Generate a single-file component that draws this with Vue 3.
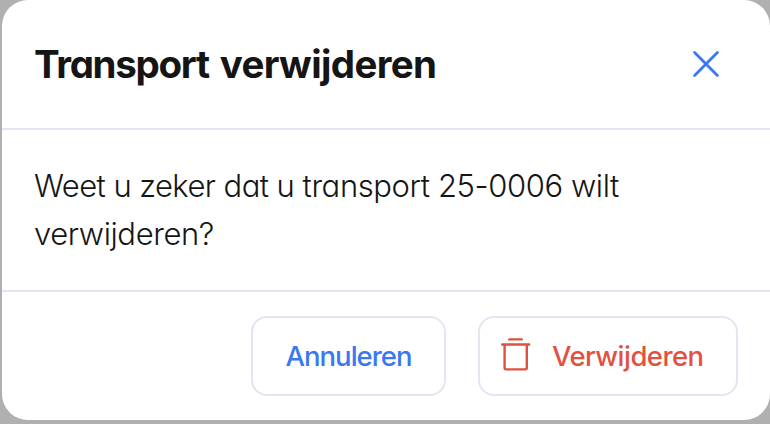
<script setup>
import { ref } from 'vue'

const open = ref(true)
const shipment = '25-0006'
const close = () => {
  open.value = false
}
</script>

<template>
  <div class="backdrop">
    <section v-if="open" class="dialog" role="dialog" aria-modal="true">
      <header class="header">
        <h1 class="title"><span class="subject">Transport</span> verwijderen</h1>
        <button class="close" type="button" @click="close">
          <svg width="32" height="32" viewBox="0 0 32 32" fill="none">
            <path d="M4.6 4.6 27.4 27.4M27.4 4.6 4.6 27.4" stroke="currentColor" stroke-width="2.8" stroke-linecap="round" />
          </svg>
        </button>
      </header>
      <div class="body">
        <p class="message"><span class="line"><span class="lead">Weet u zeker dat u</span> transport {{ shipment }} wilt</span> <span class="line">verwijderen?</span></p>
      </div>
      <footer class="footer">
        <button class="button cancel" type="button" @click="close"><span>Annuleren</span></button>
        <button class="button danger" type="button" @click="close">
          <svg class="trash" width="32" height="36" viewBox="0 0 32 36" fill="none" stroke="currentColor" stroke-width="2.4" stroke-linecap="round" stroke-linejoin="round">
            <path d="M9.2 3.4H21.8M2.2 8.5H29.2M4.6 8.7V32.2a1.2 1.2 0 0 0 1.2 1.2H25.6a1.2 1.2 0 0 0 1.2-1.2V8.7" />
          </svg>
          <span>Verwijderen</span>
        </button>
      </footer>
    </section>
  </div>
</template>

<style>
body {
  margin: 0;
  overflow: hidden;
}
</style>

<style scoped>
.backdrop {
  box-sizing: border-box;
  width: 770px;
  height: 424px;
  padding: 0 0 4px 2px;
  background: #b0b0b0;
  font-family: Inter, "Open Sans", sans-serif;
  font-feature-settings: "cv11" 1;
}
.dialog {
  display: flex;
  flex-direction: column;
  height: 420px;
  background: #fff;
  border-radius: 26px;
  overflow: hidden;
  color: #151515;
}
.header {
  box-sizing: border-box;
  display: flex;
  align-items: center;
  justify-content: space-between;
  height: 130px;
  padding: 0 48px 0 32px;
  border-bottom: 2px solid #e2e6f3;
}
.title {
  margin: 0;
  font-size: 38.5px;
  line-height: 48px;
  font-weight: 660;
  letter-spacing: -0.65px;
  word-spacing: 2.5px;
  white-space: nowrap;
}
.subject {
  letter-spacing: -1.3px;
}
.close {
  display: flex;
  padding: 0;
  border: 0;
  background: none;
  color: #3a78f2;
}
.body {
  box-sizing: border-box;
  height: 162px;
  padding: 32px 32px 0;
  border-bottom: 2px solid #e2e6f3;
}
.message {
  margin: 0;
  font-size: 31px;
  line-height: 48px;
  font-weight: 330;
}
.line {
  display: block;
  white-space: nowrap;
  letter-spacing: -0.4px;
}
.lead {
  letter-spacing: -0.58px;
}
.footer {
  display: flex;
  justify-content: flex-end;
  gap: 32px;
  padding: 24px 32px 0;
}
.button {
  box-sizing: border-box;
  display: flex;
  align-items: center;
  height: 80px;
  padding: 0;
  border: 2px solid #e2e6f3;
  border-radius: 16px;
  background: #fff;
  font: inherit;
  font-feature-settings: inherit;
  font-size: 27.5px;
  font-weight: 500;
  letter-spacing: -0.55px;
  white-space: nowrap;
}
.cancel {
  width: 195px;
  padding-left: 32.5px;
  letter-spacing: -1px;
  color: #3a78f2;
}
.danger {
  width: 260px;
  padding-left: 20px;
  gap: 20px;
  color: #e0523f;
}
.trash {
  flex: none;
  margin-bottom: 4px;
}
</style>
